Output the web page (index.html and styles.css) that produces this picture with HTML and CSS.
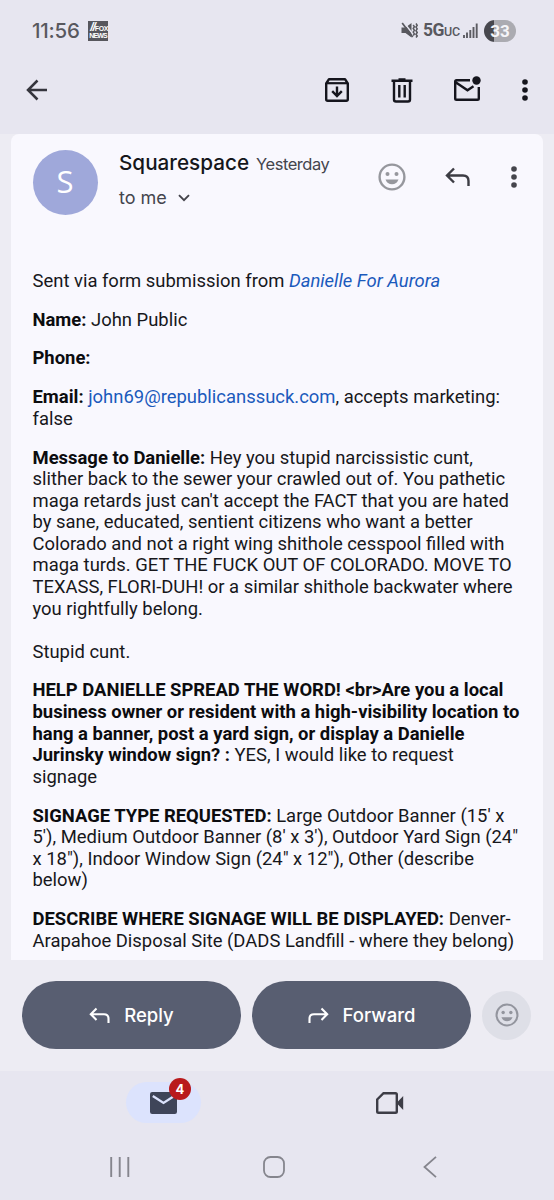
FILE: index.html
```html
<!DOCTYPE html>
<html lang="en">
<head>
<meta charset="utf-8">
<title>Mail</title>
<link rel="stylesheet" href="styles.css">
</head>
<body>
<div class="screen">
  <header class="top">
    <div class="status">
      <span class="clock">11:56</span>
      <span class="news"><span class="news-fox"><i>//</i>FOX</span><span class="news-word">NEWS</span></span>
      <svg class="mute" width="17" height="17" viewBox="0 0 17 17"><path d="M.5 5.500h4L10.500 1v14.500l-6-4.500h-4z" fill="#58585e"/><path d="M2.800 .3l10 13" stroke="#e7e6f0" stroke-width="1.500"/><path d="M1.200 1l10.500 14" stroke="#58585e" stroke-width="1.700"/><path d="M12.200 3l1.200 1.700-1.200 1.800 1.200 1.800-1.200 1.800 1.200 1.800-1.200 1.600M15 1.500l1.200 1.800L15 5.100l1.200 1.800L15 8.700l1.200 1.800-1.200 1.800 1.200 1.700L15 15.500" stroke="#58585e" stroke-width="1.500" fill="none"/></svg>
      <span class="net">5G<small>UC</small></span>
      <svg class="signal" width="15" height="15" viewBox="0 0 15 15"><path d="M1 15v-3M4 15V9.500M7.300 15V7M10.500 15V4M13.700 15V.5" stroke="#5c5c62" stroke-width="1.900"/></svg>
      <span class="battery">33</span>
    </div>
    <nav class="appbar">
      <svg class="back" width="22" height="22" viewBox="0 0 22 22"><path d="M21 11H2M11.500 1.500L2 11l9.500 9.500" stroke="#35353d" stroke-width="2.500" fill="none"/></svg>
      <svg class="archive" width="26" height="26" viewBox="0 0 26 26"><path d="M2.200 6.500v15.800q0 1.500 1.500 1.500h18.600q1.500 0 1.500-1.500V6.500L21 2.200H5z" fill="none" stroke="#15151d" stroke-width="2.400" stroke-linejoin="round"/><path d="M2 6.200h22" stroke="#15151d" stroke-width="2.200"/><path d="M13 9.500v9M8.200 14.200L13 19l4.800-4.800" fill="none" stroke="#15151d" stroke-width="2.400"/></svg>
      <svg class="trash" width="22" height="25" viewBox="0 0 22 25"><path d="M.5 2.800h21M7.500 1.500h7" stroke="#15151d" stroke-width="2.400"/><path d="M3 3v18.500q0 2 2 2h12q2 0 2-2V3M8.300 7v12.500M13.700 7v12.500" fill="none" stroke="#15151d" stroke-width="2.400"/></svg>
      <svg class="unread" width="28" height="26" viewBox="0 0 28 26"><path d="M17 4.200H3.500q-1.300 0-1.300 1.300v17q0 1.300 1.300 1.300h21q1.300 0 1.300-1.300V11M3 6.500l11.500 7.800 6-4" fill="none" stroke="#15151d" stroke-width="2.400"/><circle cx="23.500" cy="4.500" r="4.200" fill="#15151d"/></svg>
      <svg class="more" width="6" height="22" viewBox="0 0 6 22"><g fill="#15151d"><circle cx="3" cy="3" r="2.800"/><circle cx="3" cy="11" r="2.800"/><circle cx="3" cy="19" r="2.800"/></g></svg>
    </nav>
  </header>

  <main class="card">
    <div class="sender">
      <div class="avatar">S</div>
      <div class="who">
        <div class="who-line"><span class="name">Squarespace</span><span class="date">Yesterday</span></div>
        <div class="to">to me <svg width="12" height="8" viewBox="0 0 12 8"><path d="M1 1.200l5 5 5-5" fill="none" stroke="#44444b" stroke-width="1.900"/></svg></div>
      </div>
      <svg class="smile" width="28" height="28" viewBox="0 0 28 28"><circle cx="14" cy="14" r="12.400" fill="none" stroke="#96979d" stroke-width="2.400"/><g fill="#96979d"><circle cx="9.500" cy="11" r="2"/><circle cx="18.500" cy="11" r="2"/><path d="M7.500 16.500h13q-1.800 4.800-6.500 4.800t-6.500-4.800z"/></g></svg>
      <svg class="reply" width="25" height="20" viewBox="0 0 25 20"><path d="M9 1.500L2 8.500l7 7M2 8.500h16q5.500 0 5.500 5.500v5" fill="none" stroke="#3d3d44" stroke-width="2.400"/></svg>
      <svg class="dots" width="6" height="22" viewBox="0 0 6 22"><g fill="#45454c"><circle cx="3" cy="3" r="2.800"/><circle cx="3" cy="11" r="2.800"/><circle cx="3" cy="19" r="2.800"/></g></svg>
    </div>
    <article class="body">
      <p>Sent via form submission from <a class="site">Danielle For Aurora</a></p>
      <p><b>Name:</b> John Public</p>
      <p><b>Phone:</b></p>
      <p><b>Email:</b> <a>john69@republicanssuck.com</a>, accepts marketing:<br>false</p>
      <p><b>Message to Danielle:</b> Hey you stupid narcissistic cunt,<br>slither back to the sewer your crawled out of. You pathetic<br>maga retards just can't accept the FACT that you are hated<br>by sane, educated, sentient citizens who want a better<br>Colorado and not a right wing shithole cesspool filled with<br>maga turds. GET THE FUCK OUT OF COLORADO. MOVE TO<br>TEXASS, FLORI-DUH! or a similar shithole backwater where<br>you rightfully belong.<br><br>Stupid cunt.</p>
      <p><b>HELP DANIELLE SPREAD THE WORD! &lt;br&gt;Are you a local<br>business owner or resident with a high-visibility location to<br>hang a banner, post a yard sign, or display a Danielle<br>Jurinsky window sign? :</b> YES, I would like to request<br>signage</p>
      <p><b>SIGNAGE TYPE REQUESTED:</b> Large Outdoor Banner (15' x<br>5'), Medium Outdoor Banner (8' x 3'), Outdoor Yard Sign (24"<br>x 18"), Indoor Window Sign (24" x 12"), Other (describe<br>below)</p>
      <p><b>DESCRIBE WHERE SIGNAGE WILL BE DISPLAYED:</b> Denver-<br>Arapahoe Disposal Site (DADS Landfill - where they belong)</p>
    </article>
  </main>

  <section class="actions">
    <div class="pill"><svg width="21" height="17" viewBox="0 0 21 17"><path d="M7.500 1.500L1.800 7.200l5.700 5.700M1.800 7.200H15q4.500 0 4.500 4.500V16" fill="none" stroke="#fff" stroke-width="2.100"/></svg><span>Reply</span></div>
    <div class="pill"><svg width="21" height="17" viewBox="0 0 21 17"><path d="M13.500 1.500l5.700 5.700-5.700 5.700M19.200 7.200H6q-4.500 0-4.500 4.500V16" fill="none" stroke="#fff" stroke-width="2.100"/></svg><span>Forward</span></div>
    <div class="react"><svg width="24" height="24" viewBox="0 0 28 28"><circle cx="14" cy="14" r="12.200" fill="none" stroke="#93959e" stroke-width="2.400"/><g fill="#93959e"><circle cx="9.500" cy="11" r="2"/><circle cx="18.500" cy="11" r="2"/><path d="M7.500 16.500h13q-1.800 4.800-6.500 4.800t-6.500-4.800z"/></g></svg></div>
  </section>

  <footer class="bottom">
    <div class="tabs">
      <div class="mail"><svg width="27" height="22" viewBox="0 0 27 22"><rect width="27" height="22" rx="2.200" fill="#3f4559"/><path d="M2.800 4l10.700 7L24.200 4" fill="none" stroke="#dce3fd" stroke-width="2.300"/></svg><span class="badge">4</span></div>
      <svg class="meet" width="28" height="22" viewBox="0 0 28 22"><path d="M7.500 1.200h12q1.300 0 1.300 1.300v17q0 1.300-1.300 1.300H2.500q-1.300 0-1.300-1.300V7.500z" fill="none" stroke="#3d3d46" stroke-width="2.400"/><path d="M20.500 11l6.700-7v14z" fill="#3d3d46"/></svg>
    </div>
    <div class="system">
      <svg width="20" height="22" viewBox="0 0 20 22"><path d="M1.200 1v20M9.700 1v20M18.300 1v20" stroke="#85858d" stroke-width="1.900"/></svg>
      <svg class="home" width="22" height="22" viewBox="0 0 22 22"><rect x="1" y="1" width="20" height="20" rx="6.500" fill="none" stroke="#85858d" stroke-width="1.800"/></svg>
      <svg class="prev" width="14" height="22" viewBox="0 0 14 22"><path d="M13 .8L1.500 11 13 21.200" fill="none" stroke="#85858d" stroke-width="1.800"/></svg>
    </div>
  </footer>
</div>
</body>
</html>
```
FILE: styles.css
```css
* { box-sizing: border-box; }
body { margin: 0; background: #edecf3; font-family: Roboto, "Liberation Sans", sans-serif; }
svg { display: block; flex: none; }
.screen { width: 554px; height: 1200px; display: flex; flex-direction: column; overflow: hidden; background: #edecf3; }
.top { height: 134px; flex: none; background: #e7e6f0; }
.status { height: 60px; display: flex; align-items: center; padding: 1px 38px 0 32px; color: #58585e; }
.clock { font: 500 20.500px/24px Inter, sans-serif; letter-spacing: -.25px; width: 56px; white-space: nowrap; }
.news { width: 20px; height: 20px; background: #57575d; color: #fff; font: 700 7px/7px "Liberation Sans", sans-serif; display: flex; flex-direction: column; align-items: flex-end; justify-content: flex-end; letter-spacing: -.4px; overflow: hidden; padding-bottom: 2px; }
.news i { font-size: 12px; letter-spacing: -1px; }
.news-word { font-size: 7px; letter-spacing: -.8px; padding-right: 1px; }
.mute { margin-left: auto; margin-right: 5px; }
.net { font: 700 17.500px/20px Roboto, sans-serif; width: 36px; margin-right: 4px; white-space: nowrap; letter-spacing: -.5px; }
.net small { font-size: 12.500px; font-weight: 500; letter-spacing: -.2px; }
.signal { margin-right: 6px; }
.battery { width: 32px; height: 22px; border-radius: 11px; background: linear-gradient(90deg, #48484e 10px, #ababb1 10px); color: #f5f5f8; font: 700 17px/22px Roboto, sans-serif; text-align: center; }
.appbar { display: flex; align-items: center; height: 60px; padding-left: 26px; }
.archive { margin-left: 276px; }
.trash { margin-left: 41px; }
.unread { margin: -3px 0 0 40px; }
.more { margin-left: 41px; }
.card { width: 532px; height: 826px; flex: none; margin-left: 11px; background: #f9f8fe; border-radius: 8px 8px 0 0; padding: 15.500px 22px 0 21.500px; }
.sender { height: 65px; display: flex; }
.avatar { width: 65px; height: 65px; border-radius: 50%; background: #9fa8da; color: #fff; font: 400 31px/63px "Open Sans", sans-serif; text-align: center; }
.who { width: 259px; margin-left: 21.500px; }
.who-line { display: flex; align-items: baseline; height: 28px; white-space: nowrap; }
.name { font: 500 20.700px/26px Inter, sans-serif; color: #15161b; width: 137px; }
.date { font: 400 16.500px/26px Inter, sans-serif; letter-spacing: -.45px; color: #44454d; }
.to { font: 400 18px/24px Inter, sans-serif; color: #44454d; display: flex; align-items: center; gap: 11px; margin-top: 8px; }
.smile { margin-top: 13px; }
.reply { margin: 17px 0 0 39px; }
.dots { margin: 16px 0 0 41px; }
.body { padding-top: 55.300px; font-size: 18.430px; line-height: 21.550px; color: #17171b; white-space: nowrap; }
.body p { margin: 0 0 17.300px; }
.body b { font-weight: 700; color: #0c0c0f; }
.body a { color: #1b5abc; }
.site { font-style: italic; }
.actions { height: 111px; flex: none; display: flex; align-items: center; padding: 0 0 1px 22px; gap: 11px; }
.pill { width: 219px; height: 68px; border-radius: 34px; background: #585e71; color: #fff; display: flex; align-items: center; justify-content: center; gap: 14px; font: 500 18.500px/24px Inter, sans-serif; }
.react { width: 49px; height: 49px; border-radius: 50%; background: #dedfe7; display: flex; align-items: center; justify-content: center; }
.bottom { flex: 1; background: #e7e6f0; }
.tabs { height: 62px; display: flex; align-items: center; padding-left: 126px; }
.mail { width: 75px; height: 41px; border-radius: 21px; background: #dce3fd; display: flex; align-items: center; justify-content: center; position: relative; margin-top: 1px; }
.badge { position: absolute; left: 43px; top: -4px; width: 22px; height: 22px; border-radius: 50%; background: #b91a1c; color: #fff; font: 700 13px/22px Inter, sans-serif; text-align: center; }
.meet { margin-left: 175px; margin-top: 2px; }
.system { display: flex; align-items: center; height: 67px; padding-left: 110px; }
.home { margin-left: 133px; }
.prev { margin-left: 138px; }
```
